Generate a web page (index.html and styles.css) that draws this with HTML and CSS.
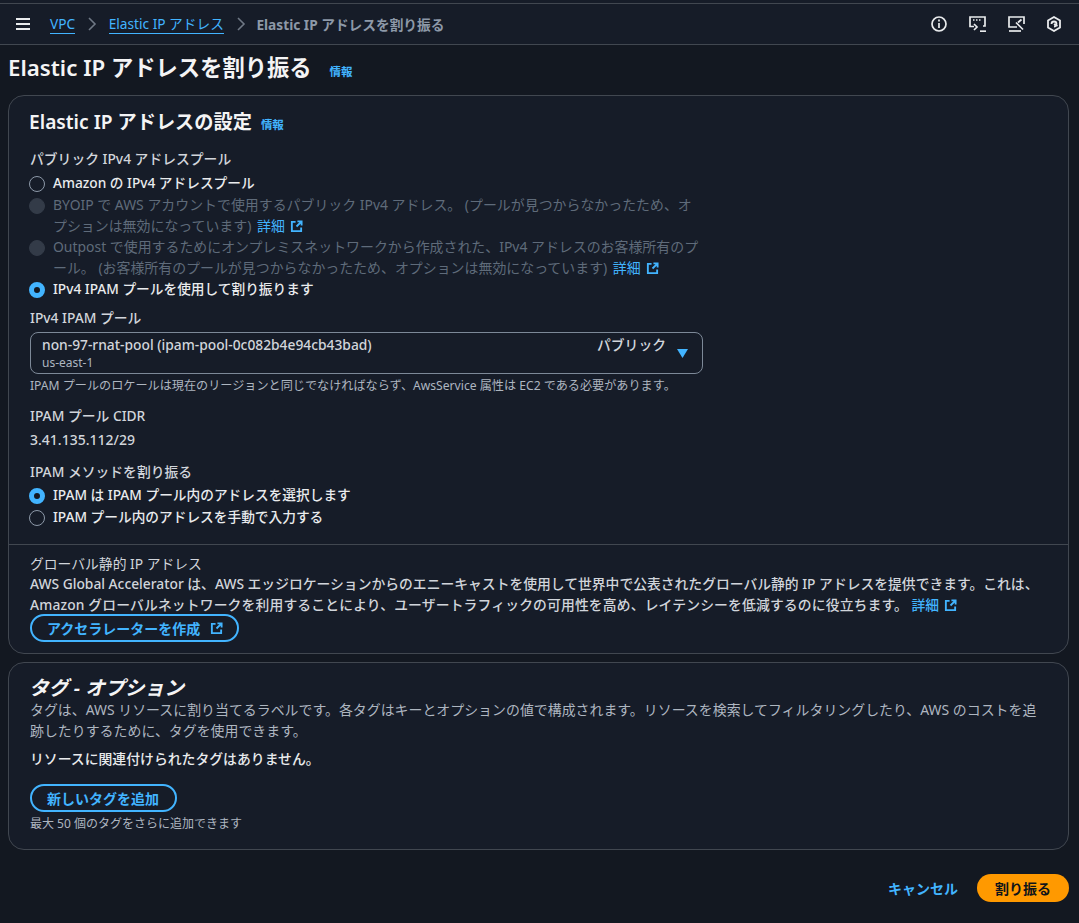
FILE: index.html
```html
<!DOCTYPE html>
<html lang="ja">
<head>
<meta charset="utf-8">
<title>Elastic IP アドレスを割り振る</title>
<link rel="stylesheet" href="styles.css">
</head>
<body>
<div class="topline"></div>
<nav class="nav">
  <svg class="burger" width="14" height="12" viewBox="0 0 14 12"><path d="M0 1h14M0 6h14M0 11h14" stroke="#e9ebed" stroke-width="2" fill="none"/></svg>
  <a class="crumb">VPC</a>
  <svg class="chev" width="10" height="14" viewBox="0 0 10 14"><path d="M2 1l6 6-6 6" stroke="#6f7885" stroke-width="1.6" fill="none"/></svg>
  <a class="crumb">Elastic IP アドレス</a>
  <svg class="chev" width="10" height="14" viewBox="0 0 10 14"><path d="M2 1l6 6-6 6" stroke="#6f7885" stroke-width="1.6" fill="none"/></svg>
  <span class="crumb-current">Elastic IP アドレスを割り振る</span>
  <div class="nav-icons">
    <svg width="16" height="16" viewBox="0 0 16 16" fill="none" stroke="#e9ebed" stroke-width="1.7"><circle cx="8" cy="8" r="7"/><path d="M8 7v5M8 3.6v2"/></svg>
    <svg width="17" height="16" viewBox="0 0 17 16" fill="none" stroke="#e9ebed" stroke-width="1.7"><path d="M5 10.500H1V1h15v9h-2"/><path d="M4 4h1.500M7 4h1.500M10 4h1.500" stroke-width="1.500"/><path d="M5 8l3 3-3 3"/><path d="M11 15.200h6"/></svg>
    <svg width="17" height="16" viewBox="0 0 17 16" fill="none" stroke="#e9ebed" stroke-width="1.7"><path d="M9 11H1V1h15v7"/><path d="M1 15h12"/><path d="M8 6.500l2 2 5 5M13.500 3.500l-3.500 3"/></svg>
    <svg width="14" height="16" viewBox="0 0 14 16" fill="none" stroke="#e9ebed" stroke-width="1.8"><path d="M7 1l6 3.500v7L7 15l-6-3.500v-7z"/><path d="M4.500 8a2.500 2.500 0 1 1 2.500 2.500M7 8l3.500 2"/></svg>
  </div>
</nav>

<header class="page-head">
  <h1>Elastic IP アドレスを割り振る</h1>
  <a class="info">情報</a>
</header>

<section class="card">
  <div class="card-main">
    <div class="card-title"><h2>Elastic IP アドレスの設定</h2><a class="info">情報</a></div>

    <div class="label pub-label">パブリック IPv4 アドレスプール</div>
    <div class="radio-group">
      <div class="radio-row"><span class="radio"></span><span class="radio-text">Amazon の IPv4 アドレスプール</span></div>
      <div class="radio-row"><span class="radio disabled"></span><span class="radio-text dim">BYOIP で AWS アカウントで使用するパブリック IPv4 アドレス。 (プールが見つからなかったため、オプションは無効になっています) <a class="link">詳細<svg class="ext" width="13" height="13" viewBox="0 0 14 14" fill="none" stroke="#42b4ff" stroke-width="2"><path d="M6 2H2v10h10V8"/><path d="M8 1.500h4.500V6M12 2L7 7"/></svg></a></span></div>
      <div class="radio-row"><span class="radio disabled"></span><span class="radio-text dim">Outpost で使用するためにオンプレミスネットワークから作成された、IPv4 アドレスのお客様所有のプール。 (お客様所有のプールが見つからなかったため、オプションは無効になっています) <a class="link">詳細<svg class="ext" width="13" height="13" viewBox="0 0 14 14" fill="none" stroke="#42b4ff" stroke-width="2"><path d="M6 2H2v10h10V8"/><path d="M8 1.500h4.500V6M12 2L7 7"/></svg></a></span></div>
      <div class="radio-row"><span class="radio checked"></span><span class="radio-text">IPv4 IPAM プールを使用して割り振ります</span></div>
    </div>

    <div class="label pool-label">IPv4 IPAM プール</div>
    <div class="select">
      <div class="select-main">
        <div class="select-name">non-97-rnat-pool (ipam-pool-0c082b4e94cb43bad)</div>
        <div class="select-sub">us-east-1</div>
      </div>
      <span class="select-tag">パブリック</span>
      <svg class="caret" width="11" height="9" viewBox="0 0 11 9"><path d="M0 0h11L5.500 9z" fill="#42b4ff"/></svg>
    </div>
    <div class="hint">IPAM プールのロケールは現在のリージョンと同じでなければならず、AwsService 属性は EC2 である必要があります。</div>

    <div class="label cidr-label">IPAM プール CIDR</div>
    <div class="value">3.41.135.112/29</div>

    <div class="label method-label">IPAM メソッドを割り振る</div>
    <div class="radio-group">
      <div class="radio-row"><span class="radio checked"></span><span class="radio-text">IPAM は IPAM プール内のアドレスを選択します</span></div>
      <div class="radio-row"><span class="radio"></span><span class="radio-text">IPAM プール内のアドレスを手動で入力する</span></div>
    </div>
  </div>

  <div class="card-foot">
    <div class="foot-title">グローバル静的 IP アドレス</div>
    <p class="foot-text">AWS Global Accelerator は、AWS エッジロケーションからのエニーキャストを使用して世界中で公表されたグローバル静的 IP アドレスを提供できます。これは、<span class="foot-second">Amazon グローバルネットワークを利用することにより、ユーザートラフィックの可用性を高め、レイテンシーを低減するのに役立ちます。</span> <a class="link">詳細<svg class="ext" width="13" height="13" viewBox="0 0 14 14" fill="none" stroke="#42b4ff" stroke-width="2"><path d="M6 2H2v10h10V8"/><path d="M8 1.500h4.500V6M12 2L7 7"/></svg></a></p>
    <button class="btn">アクセラレーターを作成<svg class="btn-ext" width="13" height="13" viewBox="0 0 14 14" fill="none" stroke="#42b4ff" stroke-width="2"><path d="M6 2H2v10h10V8"/><path d="M8 1.500h4.500V6M12 2L7 7"/></svg></button>
  </div>
</section>

<section class="card tags">
  <h2 class="tags-title">タグ - オプション</h2>
  <p class="tags-text">タグは、AWS リソースに割り当てるラベルです。各タグはキーとオプションの値で構成されます。リソースを検索してフィルタリングしたり、AWS のコストを追跡したりするために、タグを使用できます。</p>
  <div class="tags-empty">リソースに関連付けられたタグはありません。</div>
  <button class="btn add-btn">新しいタグを追加</button>
  <div class="tags-hint">最大 50 個のタグをさらに追加できます</div>
</section>

<footer class="actions">
  <a class="cancel">キャンセル</a>
  <button class="primary">割り振る</button>
</footer>
</body>
</html>
```
FILE: styles.css
```css
* { box-sizing: border-box; }
html, body { margin: 0; padding: 0; }
body {
  background: #131821;
  color: #d1d5db;
  font-family: "Noto Sans", "Noto Sans CJK JP", sans-serif;
  font-size: 13.8px;
  font-weight: 500;
  line-height: 21px;
  text-spacing-trim: space-all;
  height: 923px;
  overflow: hidden;
}
.topline { height: 4px; border-bottom: 1px solid #414750; background: #161c28; }
.nav {
  height: 41px;
  display: flex;
  align-items: center;
  background: #161c28;
  border-bottom: 1px solid #414750;
  padding: 0 16px;
  font-size: 13.7px;
  font-weight: 400;
}
.burger { margin-right: 20px; }
.crumb { color: #42b4ff; border-bottom: 1px solid #42b4ff; line-height: 18px; }
.chev { margin: 0 11.5px 0 12px; }
.crumb-current { color: #8d99a8; font-weight: 700; margin-left: -1px; }
.nav-icons { margin-left: auto; display: flex; align-items: center; gap: 22px; padding-right: 2px; }
.page-head { display: flex; align-items: baseline; padding: 8px 8px 0; gap: 18px; height: 50px; }
h1 { margin: 0; font-size: 22.3px; line-height: 30px; font-weight: 600; color: #f4f4f5; }
.info { color: #42b4ff; font-size: 11.5px; font-weight: 600; }
.card {
  margin: 0 10px 8px 8px;
  border: 1px solid #414750;
  border-radius: 16px;
  background: #161c28;
}
.card-main { padding: 12px 21px 16px; }
.card-title { display: flex; align-items: baseline; gap: 9px; margin: 0 0 12px -1px; }
h2 { margin: 0; font-size: 19.2px; line-height: 28px; font-weight: 600; color: #f4f4f5; }
.label { color: #d1d5db; line-height: 21px; }
.pub-label { margin-bottom: 3px; }
.radio-group { display: flex; flex-direction: column; }
.radio-row { display: flex; align-items: flex-start; gap: 8px; min-height: 22px; margin-left: -1px; }
.radio {
  flex: none;
  width: 16px;
  height: 16px;
  margin-top: 4px;
  border-radius: 50%;
  border: 1.5px solid #8d99a8;
}
.radio.disabled { background: #333b48; border-color: #333b48; }
.radio.checked { border: 5px solid #42b4ff; background: #131821; }
.radio-text { width: 650px; color: #e9ebed; font-size: 13.7px; }
.radio-text.dim { color: #5f6b7a; font-size: 13.93px; font-weight: 400; }
.link { color: #42b4ff; }
.dim .link { margin-left: 2px; }
.ext { margin-left: 5px; vertical-align: -2px; }
.pool-label { margin-top: 7px; margin-bottom: 4px; }
.select {
  display: flex;
  align-items: flex-start;
  width: 673px;
  height: 42px;
  border: 1px solid #7d8998;
  border-radius: 8px;
  padding: 2px 14px 0 11px;
}
.select-main { flex: 1; }
.select-name { color: #d1d5db; line-height: 20px; }
.select-sub { font-size: 12px; font-weight: 400; line-height: 15px; color: #aeb6c0; }
.select-tag { color: #d1d5db; margin-right: 11px; line-height: 20px; }
.caret { margin-top: 14px; }
.hint { font-size: 12.13px; font-weight: 400; line-height: 16px; color: #aeb6c0; margin-top: 4px; }
.cidr-label { margin-top: 11px; }
.value { margin-top: 3px; font-size: 14px; color: #d1d5db; }
.method-label { margin-top: 11px; margin-bottom: 2px; }
.card-foot { border-top: 1px solid #414750; padding: 8px 21px 11px; }
.foot-title { color: #d1d5db; margin-bottom: -1px; font-weight: 400; }
.foot-text { margin: 0; color: #d1d5db; }
.foot-second { letter-spacing: 0.15px; }
.btn {
  display: flex;
  align-items: center;
  width: fit-content;
  height: 28px;
  margin-top: -1px;
  padding: 0 16px 0 15px;
  font: inherit;
  font-size: 14px;
  font-weight: 600;
  color: #42b4ff;
  background: transparent;
  border: 2px solid #42b4ff;
  border-radius: 14px;
}
.btn-ext { margin: 0 -2px 0 10px; }
.tags { padding: 13px 21px 17px; }
.tags-title { font-size: 19.8px; font-style: italic; line-height: 23px; margin-left: -1px; }
.tags-text { margin: 0; color: #aeb6c0; width: 1018px; font-size: 13.93px; font-weight: 400; }
.tags-empty { margin-top: 7px; color: #e9ebed; font-size: 13.85px; }
.add-btn { margin-top: 15px; }
.tags-hint { font-size: 12px; font-weight: 400; line-height: 16px; color: #aeb6c0; margin-top: 4px; }
.actions { display: flex; justify-content: flex-end; align-items: center; gap: 19px; padding: 16px 10px 0 0; }
.cancel { color: #42b4ff; font-size: 14px; font-weight: 600; }
.primary {
  height: 28px;
  width: 92px;
  border: 0;
  border-radius: 14px;
  background: #ff9900;
  color: #0f141a;
  font: inherit;
  font-size: 14px;
  font-weight: 600;
}
```
